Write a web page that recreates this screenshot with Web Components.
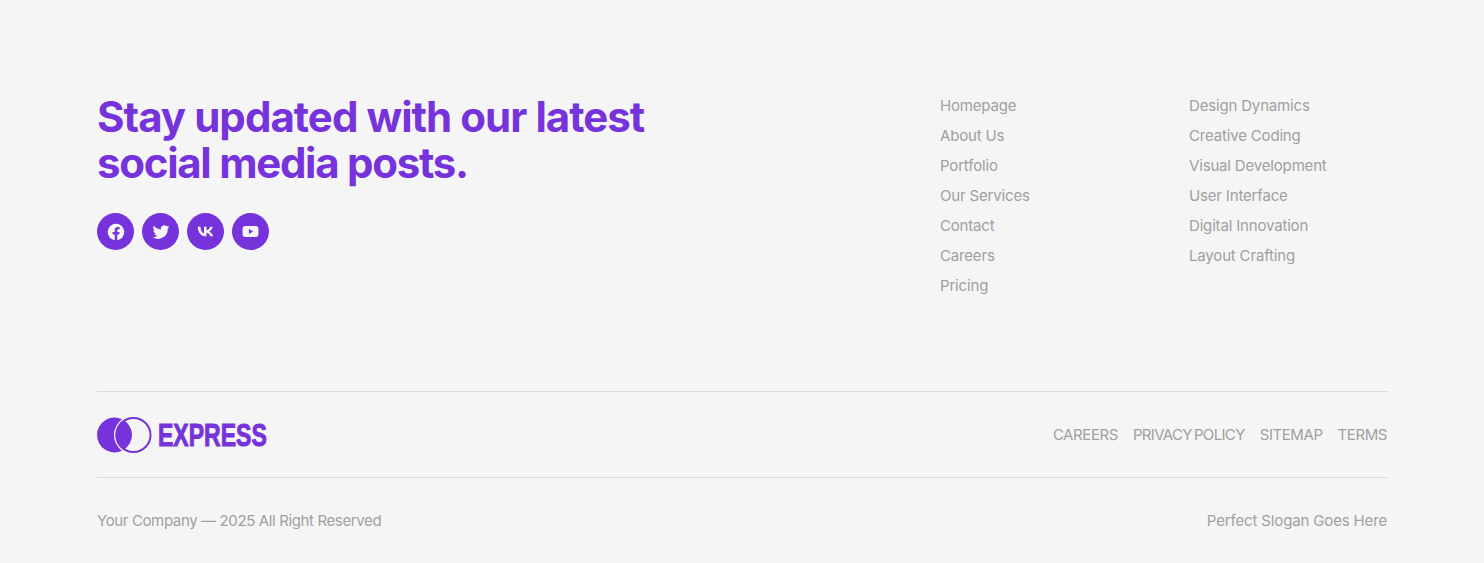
<!DOCTYPE html>
<html>
<head>
<meta charset="utf-8">
<title>Footer</title>
<style>
    html, body { margin: 0; padding: 0; background: #f5f5f5; }
    body { font-family: "Inter", "Noto Sans", sans-serif; color: #999; }
</style>
</head>
<body>
<site-footer></site-footer>

<script>
const PURPLE = '#7633dc';

class SocialIcon extends HTMLElement {
    constructor() {
        super();
        this.attachShadow({mode: 'open'});
        const size = this.getAttribute('size') || 20;
        this.shadowRoot.innerHTML = `
            <style>
                :host {
                    display: flex;
                    width: 37px;
                    height: 37px;
                    border-radius: 50%;
                    background: ${PURPLE};
                    align-items: center;
                    justify-content: center;
                }
                svg { width: ${size}px; height: ${size}px; fill: #f5f5f5; display: block; }
            </style>
            <svg viewBox="0 0 24 24"><path fill-rule="evenodd" d="${this.getAttribute('d')}"></path></svg>
        `;
    }
}

class FooterLinks extends HTMLElement {
    constructor() {
        super();
        this.attachShadow({mode: 'open'});
        this.shadowRoot.innerHTML = `
            <style>
                :host {
                    display: flex;
                    flex-direction: column;
                    font-size: 15px;
                    line-height: 30px;
                    letter-spacing: -0.17px;
                    color: #a0a0a0;
                }
            </style>
            <slot></slot>
        `;
    }
}

class BrandLogo extends HTMLElement {
    constructor() {
        super();
        this.attachShadow({mode: 'open'});
        this.shadowRoot.innerHTML = `
            <style>
                :host { display: flex; align-items: center; gap: 6px; color: ${PURPLE}; }
                svg { display: block; width: 55px; height: 36px; }
                span {
                    font-family: "Liberation Sans", sans-serif;
                    font-weight: 700;
                    font-size: 32px;
                    line-height: 36px;
                    display: inline-block;
                    transform: scaleX(0.72);
                    transform-origin: left center;
                    width: 110px;
                    white-space: nowrap;
                    -webkit-text-stroke: 1px ${PURPLE};
                }
            </style>
            <svg viewBox="0 0 55 36">
                <path fill="${PURPLE}" d="M25.05 2.2A17.5 17.5 0 1 0 25.05 33.8A19.5 19.5 0 0 1 25.05 2.2z"></path>
                <circle cx="36.5" cy="18" r="17" fill="none" stroke="${PURPLE}" stroke-width="2"></circle>
                <path fill="${PURPLE}" d="M26.5 3A17.5 17.5 0 0 1 26.5 33A18 18 0 0 1 26.5 3z"></path>
            </svg>
            <span>EXPRESS</span>
        `;
    }
}

class SiteFooter extends HTMLElement {
    constructor() {
        super();
        this.attachShadow({mode: 'open'});
        this.shadowRoot.innerHTML = `
            <style>
                :host {
                    display: block;
                    box-sizing: border-box;
                    width: 100%;
                    height: 563px;
                    padding: 91px 97px 0;
                    background: #f5f5f5;
                    font-family: "Inter", "Noto Sans", sans-serif;
                    color: #a0a0a0;
                }
                .top { display: flex; height: 300px; }
                .lead { flex: 1; padding-top: 3px; }
                h2 {
                    margin: 0 0 27px;
                    font-size: 42px;
                    line-height: 46px;
                    font-weight: 700;
                    letter-spacing: -0.96px;
                    color: ${PURPLE};
                }
                h2 span { letter-spacing: -1.28px; }
                .social { display: flex; gap: 8px; }
                .cols { display: grid; grid-template-columns: 249px 198px; }
                .bar {
                    display: flex;
                    justify-content: space-between;
                    align-items: center;
                    border-top: 1px solid #d9d9d9;
                    font-size: 15px;
                }
                .brand { height: 85px; }
                .legal { height: 85px; }
                nav { display: flex; gap: 15px; letter-spacing: -0.42px; }
                .tight { letter-spacing: -0.66px; word-spacing: -1.5px; }
                .copy { letter-spacing: -0.37px; }
                .slogan { letter-spacing: -0.15px; }
            </style>
            <div class="top">
                <div class="lead">
                    <h2>Stay updated with our latest<br><span>social media posts.</span></h2>
                    <div class="social">
                        <social-icon size="22" d="M12 3a9 9 0 0 0-1.4 17.9v-6.3H8.300v-2.600h2.300v-2c0-2.300 1.300-3.500 3.400-3.500 1 0 2 .2 2 .2v2.200h-1.100c-1.100 0-1.500.7-1.500 1.400v1.700h2.500l-.4 2.600h-2.100v6.300A9 9 0 0 0 12 3z"></social-icon>
                        <social-icon size="20" d="M22 5.900c-.7.300-1.500.5-2.400.6.900-.5 1.500-1.300 1.800-2.300-.8.500-1.700.8-2.600 1a4.100 4.100 0 0 0-7 3.700C8.400 8.700 5.400 7.100 3.400 4.600a4.100 4.100 0 0 0 1.300 5.500c-.7 0-1.300-.2-1.900-.5 0 2 1.400 3.700 3.300 4.100-.6.200-1.200.2-1.900.1.500 1.600 2 2.800 3.800 2.800A8.300 8.300 0 0 1 2 18.300 11.600 11.600 0 0 0 20 8c.8-.6 1.500-1.300 2-2.100z"></social-icon>
                        <social-icon size="21" d="M13 17.500C6.900 17.500 3.400 13.300 3.200 6.500h3.100c.1 5 2.300 7.100 4 7.500V6.500h2.900v4.300c1.700-.2 3.500-2.100 4.100-4.300h2.900c-.5 2.700-2.500 4.600-3.900 5.400 1.400.7 3.700 2.400 4.500 5.600h-3.200c-.7-2.100-2.400-3.800-4.500-4v4h-.6z"></social-icon>
                        <social-icon size="19" d="M5.500 5h13A3.500 3.500 0 0 1 22 8.500v7a3.500 3.500 0 0 1-3.500 3.500h-13A3.500 3.500 0 0 1 2 15.500v-7A3.500 3.500 0 0 1 5.500 5zM10 8.800v6.400l5.500-3.200z"></social-icon>
                    </div>
                </div>
                <div class="cols">
                    <footer-links>
                        <div>Homepage</div><div>About Us</div><div>Portfolio</div><div>Our Services</div><div>Contact</div><div>Careers</div><div>Pricing</div>
                    </footer-links>
                    <footer-links>
                        <div>Design Dynamics</div><div>Creative Coding</div><div>Visual Development</div><div>User Interface</div><div>Digital Innovation</div><div>Layout Crafting</div>
                    </footer-links>
                </div>
            </div>
            <div class="bar brand">
                <brand-logo></brand-logo>
                <nav><span>CAREERS</span><span class="tight">PRIVACY POLICY</span><span>SITEMAP</span><span>TERMS</span></nav>
            </div>
            <div class="bar legal">
                <span class="copy">Your Company — 2025 All Right Reserved</span>
                <span class="slogan">Perfect Slogan Goes Here</span>
            </div>
        `;
    }
}

customElements.define('social-icon', SocialIcon);
customElements.define('footer-links', FooterLinks);
customElements.define('brand-logo', BrandLogo);
customElements.define('site-footer', SiteFooter);
</script>
</body>
</html>
